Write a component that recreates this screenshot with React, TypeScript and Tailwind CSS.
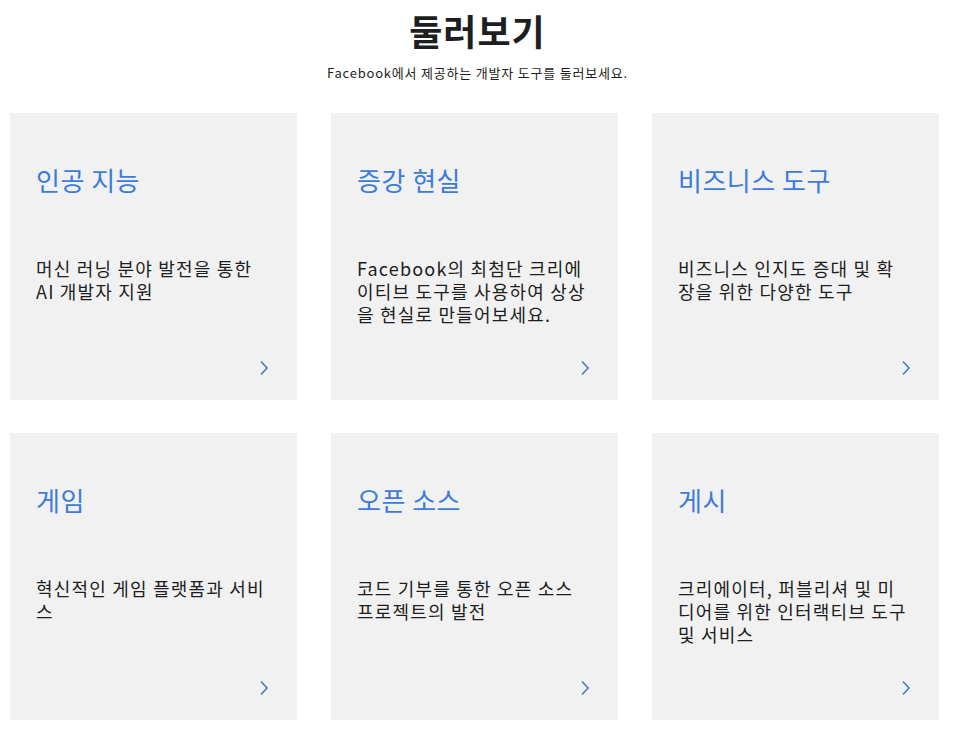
import React from 'react'

type Tool = {
  title: string
  description: string
}

// line breaks follow the reference wrapping (break-all at ~235px)
const TOOLS: Tool[] = [
  { title: '인공 지능', description: '머신 러닝 분야 발전을 통한\nAI 개발자 지원' },
  { title: '증강 현실', description: 'Facebook의 최첨단 크리에\n이티브 도구를 사용하여 상상\n을 현실로 만들어보세요.' },
  { title: '비즈니스 도구', description: '비즈니스 인지도 증대 및 확\n장을 위한 다양한 도구' },
  { title: '게임', description: '혁신적인 게임 플랫폼과 서비\n스' },
  { title: '오픈 소스', description: '코드 기부를 통한 오픈 소스\n프로젝트의 발전' },
  { title: '게시', description: '크리에이터, 퍼블리셔 및 미\n디어를 위한 인터랙티브 도구\n및 서비스' },
]

const FONT = "font-['Noto_Sans_CJK_KR','Noto_Sans',sans-serif]"

function Chevron() {
  return (
    <svg width="10" height="16" viewBox="0 0 10 16" fill="none" className="text-[#4a78cc]">
      <polyline points="2,1.5 8,8 2,14.5" stroke="currentColor" strokeWidth="1.6" />
    </svg>
  )
}

export default function App() {
  return (
    <div className={`w-[955px] h-[734px] bg-white overflow-hidden ${FONT}`}>
      {/* Header */}
      <div className="text-center pt-[5px]">
        <h1 className="text-[36px] leading-[50px] font-bold tracking-[1px] text-[#1c1e21]">둘러보기</h1>
        <p className="mt-[10px] text-[13px] leading-[16px] tracking-[0.8px] text-[#1c1e21]">
          Facebook에서 제공하는 개발자 도구를 둘러보세요.
        </p>
      </div>

      {/* Cards */}
      <div className="grid grid-cols-[287px_287px_287px] gap-x-[34px] gap-y-[33px] pl-[10px] mt-[32px]">
        {TOOLS.map((tool) => (
          <div key={tool.title} className="h-[287px] bg-[#f1f1f1] flex flex-col pl-[26px] pr-[28px] pt-[50px] pb-[24px]">
            <h2 className="text-[26px] leading-[34px] tracking-[0.5px] text-[#3b7bdb]">{tool.title}</h2>
            <p className="mt-[60px] text-[18px] leading-[23px] tracking-[1.2px] text-[#1c1e21] whitespace-pre-line">
              {tool.description}
            </p>
            <div className="mt-auto self-end">
              <Chevron />
            </div>
          </div>
        ))}
      </div>
    </div>
  )
}
